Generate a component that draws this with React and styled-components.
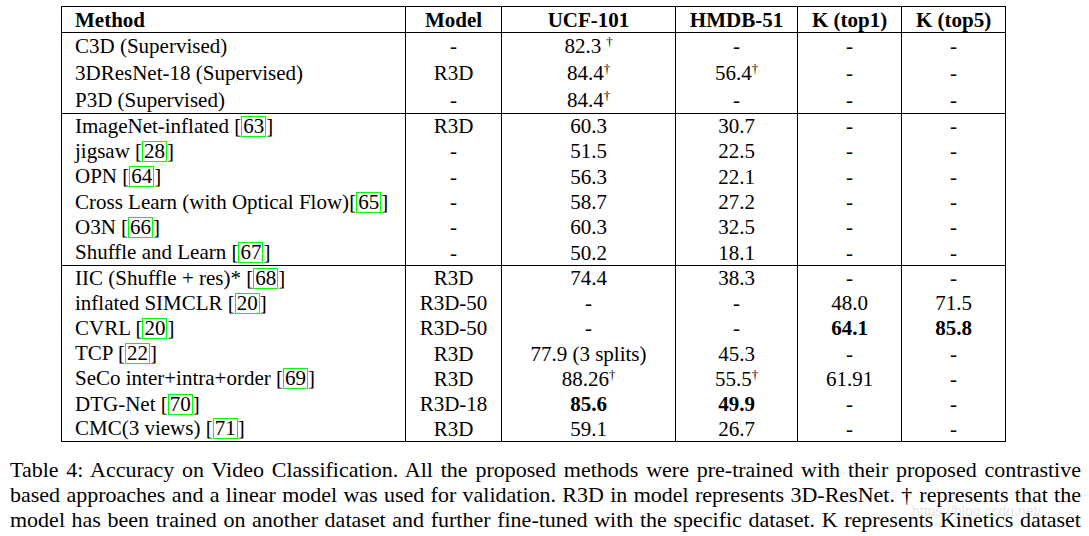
import React from "react";
import styled, { createGlobalStyle } from "styled-components";

const Global = createGlobalStyle`
  html, body { margin: 0; padding: 0; background: #fff; }
  body { font-family: "Liberation Serif", "Times New Roman", "DejaVu Serif", serif; color: #000; }
`;

const Page = styled.div`
  position: relative;
  width: 1089px;
  height: 536px;
  padding-top: 6px;
  box-sizing: border-box;
  overflow: hidden;
  font-family: "Liberation Serif", "Times New Roman", serif;
`;

const Table = styled.table`
  margin-left: 61px;
  width: 945px;
  border-collapse: collapse;
  table-layout: fixed;
  font-family: "Liberation Serif", "Times New Roman", serif;
  font-size: 21px;
  border: 1px solid #000;
`;

const Body = styled.tbody`
  border-top: 1px solid #000;
`;

const Row = styled.tr`
  height: ${(p) => p.$h}px;
`;

const Cell = styled.td`
  padding: 0 0 0 ${(p) => (p.$left ? 13 : 0)}px;
  text-align: ${(p) => (p.$left ? "left" : "center")};
  border-left: 1px solid #000;
  line-height: 20px;
  white-space: nowrap;
  vertical-align: middle;
  font-weight: ${(p) => (p.$bold ? 700 : 400)};
`;

const Head = styled.th`
  padding: 0 0 0 ${(p) => (p.$left ? 13 : 0)}px;
  text-align: ${(p) => (p.$left ? "left" : "center")};
  border-left: 1px solid #000;
  line-height: 20px;
  font-weight: 700;
  white-space: nowrap;
`;

const Dag = styled.sup`
  font-size: 13px;
  line-height: 0;
  vertical-align: 7px;
  margin-left: ${(p) => (p.$gap ? 5 : 0)}px;
`;

const Ref = styled.span`
  display: inline-block;
  border: 1px solid #00ff00;
  line-height: 19px;
  padding: 0 1px;
`;

const Caption = styled.div`
  margin: 15px 8px 0 10px;
  font-family: "Liberation Serif", "Times New Roman", serif;
  font-size: 22px;
  line-height: 25px;
`;

const CaptionLine = styled.div`
  text-align: justify;
  text-align-last: justify;
  white-space: nowrap;
`;

const Watermark = styled.span`
  position: absolute;
  left: 912px;
  top: 503px;
  font-family: "Liberation Sans", Arial, sans-serif;
  font-size: 14px;
  color: rgba(170, 170, 180, 0.3);
  pointer-events: none;
`;

const Cite = ({ n }) => (
  <>
    [<Ref>{n}</Ref>]
  </>
);

const renderVal = (x) => {
  const o = x && typeof x === "object" ? x : { t: x };
  return (
    <Cell $bold={o.b}>
      {o.t}
      {o.d && <Dag $gap={o.gap}>†</Dag>}
    </Cell>
  );
};

const sections = [
  {
    h: 27,
    rows: [
      [<>C3D (Supervised)</>, "-", { t: "82.3", d: 1, gap: 1 }, "-", "-", "-"],
      [<>3DResNet-18 (Supervised)</>, "R3D", { t: "84.4", d: 1 }, { t: "56.4", d: 1 }, "-", "-"],
      [<>P3D (Supervised)</>, "-", { t: "84.4", d: 1 }, "-", "-", "-"],
    ],
  },
  {
    h: 25.33,
    rows: [
      [<>ImageNet-inflated <Cite n="63" /></>, "R3D", "60.3", "30.7", "-", "-"],
      [<>jigsaw <Cite n="28" /></>, "-", "51.5", "22.5", "-", "-"],
      [<>OPN <Cite n="64" /></>, "-", "56.3", "22.1", "-", "-"],
      [<>Cross Learn (with Optical Flow)<Cite n="65" /></>, "-", "58.7", "27.2", "-", "-"],
      [<>O3N <Cite n="66" /></>, "-", "60.3", "32.5", "-", "-"],
      [<>Shuffle and Learn <Cite n="67" /></>, "-", "50.2", "18.1", "-", "-"],
    ],
  },
  {
    h: 25.2,
    rows: [
      [<>IIC (Shuffle + res)* <Cite n="68" /></>, "R3D", "74.4", "38.3", "-", "-"],
      [<>inflated SIMCLR <Cite n="20" /></>, "R3D-50", "-", "-", "48.0", "71.5"],
      [<>CVRL <Cite n="20" /></>, "R3D-50", "-", "-", { t: "64.1", b: 1 }, { t: "85.8", b: 1 }],
      [<>TCP <Cite n="22" /></>, "R3D", "77.9 (3 splits)", "45.3", "-", "-"],
      [<>SeCo inter+intra+order <Cite n="69" /></>, "R3D", { t: "88.26", d: 1 }, { t: "55.5", d: 1 }, "61.91", "-"],
      [<>DTG-Net <Cite n="70" /></>, "R3D-18", { t: "85.6", b: 1 }, { t: "49.9", b: 1 }, "-", "-"],
      [<>CMC(3 views) <Cite n="71" /></>, "R3D", "59.1", "26.7", "-", "-"],
    ],
  },
];

const widths = [344, 96, 174, 122, 104, 104];

export default function App() {
  return (
    <Page>
      <Global />
      <Table>
        <colgroup>
          {widths.map((w, i) => (
            <col key={i} style={{ width: w }} />
          ))}
        </colgroup>
        <thead>
          <Row $h={26}>
            <Head $left>Method</Head>
            <Head>Model</Head>
            <Head>UCF-101</Head>
            <Head>HMDB-51</Head>
            <Head>K (top1)</Head>
            <Head>K (top5)</Head>
          </Row>
        </thead>
        {sections.map((s, si) => (
          <Body key={si}>
            {s.rows.map((r, ri) => (
              <Row key={ri} $h={s.h}>
                <Cell $left>{r[0]}</Cell>
                {r.slice(1).map((c, ci) => (
                  <React.Fragment key={ci}>{renderVal(c)}</React.Fragment>
                ))}
              </Row>
            ))}
          </Body>
        ))}
      </Table>
      <Caption>
        <CaptionLine>
          Table 4: Accuracy on Video Classification. All the proposed methods were pre-trained with their proposed contrastive
        </CaptionLine>
        <CaptionLine>
          based approaches and a linear model was used for validation. R3D in model represents 3D-ResNet. † represents that the
        </CaptionLine>
        <CaptionLine>
          model has been trained on another dataset and further fine-tuned with the specific dataset. K represents Kinetics dataset
        </CaptionLine>
      </Caption>
      <Watermark>https://blog.csdn.net/</Watermark>
    </Page>
  );
}
